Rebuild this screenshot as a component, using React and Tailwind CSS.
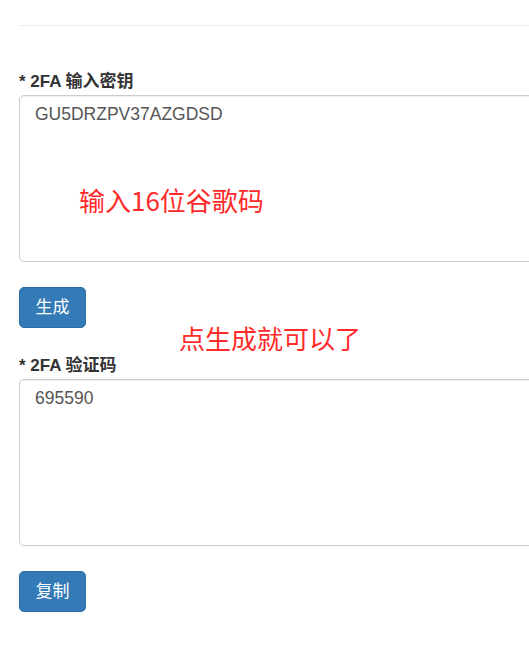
const Field = ({ label, value }) => (
  <div className="relative">
    <label className="block text-[17px] leading-[20px] font-bold text-[#333] mb-[3px]">
      * 2FA {label}
    </label>
    <textarea
      readOnly
      value={value}
      className="block w-[540px] h-[167px] border border-[#ccc] rounded-[5px] pt-[7px] px-[15px] text-[17.5px] leading-[23px] text-[#555] resize-none shadow-[inset_0_1px_1px_rgba(0,0,0,0.075)] outline-none"
    />
  </div>
);

const Button = ({ children }) => (
  <button className="w-[67px] h-[41px] bg-[#337ab7] border border-[#2e6da4] rounded-[5px] text-white text-[17px]">
    {children}
  </button>
);

export default function App() {
  return (
    <div
      className="relative w-[529px] h-[670px] overflow-hidden bg-white pl-[19px]"
      style={{ fontFamily: '"Liberation Sans", Arial, "Noto Sans CJK SC", sans-serif' }}
    >
      <div className="pt-[25px]">
        <hr className="w-[540px] border-0 border-t border-[#eee]" />
      </div>

      <div className="mt-[46px]">
        <Field label="输入密钥" value="GU5DRZPV37AZGDSD" />
      </div>
      <div className="mt-[25px]">
        <Button>生成</Button>
      </div>

      <div className="mt-[28px]">
        <Field label="验证码" value="695590" />
      </div>
      <div className="mt-[25px]">
        <Button>复制</Button>
      </div>

      {/* red notes drawn over the form */}
      <div className="absolute left-[79px] top-[184px] text-[26px] leading-[32px] text-[#ff2a2a] font-['Noto_Sans_CJK_SC',sans-serif]">
        输入16位谷歌码
      </div>
      <div className="absolute left-[179px] top-[322px] text-[26px] leading-[32px] text-[#ff2a2a] font-['Noto_Sans_CJK_SC',sans-serif]">
        点生成就可以了
      </div>
    </div>
  );
}
